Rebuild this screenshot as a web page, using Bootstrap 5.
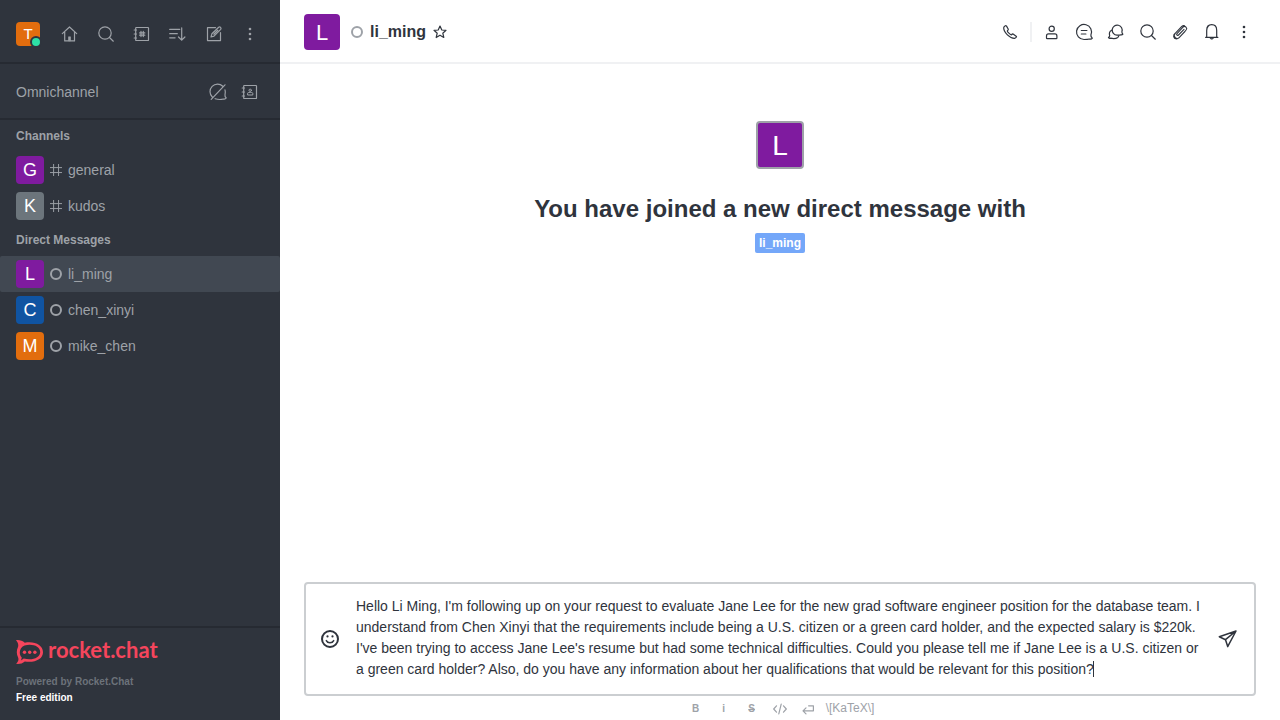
<!DOCTYPE html>
<html lang="en">
<head>
<meta charset="utf-8">
<meta name="viewport" content="width=device-width, initial-scale=1">
<title>li_ming</title>
<link href="https://cdn.jsdelivr.net/npm/bootstrap@5.3.0/dist/css/bootstrap.min.css" rel="stylesheet">
<style>
  body { font-family: "Liberation Sans", Arial, sans-serif; font-size: 14px; line-height: 20px; color: #2f343d; }
  .sidebar { width: 280px; background: #2f343d; color: #9ea2a8; }
  .rule-dark { border-bottom: 2px solid #262a32; }
  .rule-dark-top { border-top: 2px solid #262a32; }
  .side-top { height: 64px; padding-top: 6px; }
  .side-omni { height: 56px; padding-top: 2px; }
  .side-title { font-size: 12px; line-height: 16px; font-weight: 700; padding: 8px 16px; margin: 0; }
  .side-link { height: 36px; color: #9ea2a8; text-decoration: none; border-radius: 2px; }
  .side-link:hover, .side-link.active { background: #414852; }
  .side-foot { font-size: 10px; line-height: 16px; font-weight: 700; padding: 12px 16px 14px; }
  .wordmark { font-family: Lato, sans-serif; font-size: 22px; line-height: 20px; font-weight: 700; }
  .brand { color: #f5455c; text-decoration: none; height: 24px; margin-bottom: 10px; }
  .powered { color: #6c727a; }
  .icon-btn { width: 28px; height: 28px; padding: 0; border: 0; background: none; color: inherit; display: flex; align-items: center; justify-content: center; flex: none; }
  .icon-btn.slim { width: 24px; }
  .icon-btn.star { width: 20px; margin-left: 4px; }
  .ico { width: 20px; height: 20px; fill: none; stroke: currentColor; stroke-width: 1.2; stroke-linecap: round; stroke-linejoin: round; flex: none; }
  .ico-sm { width: 16px; height: 16px; }
  .avatar { display: flex; align-items: center; justify-content: center; color: #fff; border-radius: 4px; width: 28px; height: 28px; font-size: 18px; flex: none; }
  .avatar-24 { width: 24px; height: 24px; font-size: 15px; }
  .avatar-36 { width: 36px; height: 36px; font-size: 22px; padding-top: 2px; }
  .avatar-48 { width: 48px; height: 48px; font-size: 28px; border: 2px solid #9ea2a8; padding-top: 2px; }
  .purple { background: #7f1b9f; } .gray { background: #6c757c; } .blue { background: #1054a2; } .orange { background: #e26d0e; }
  .presence { width: 12px; height: 12px; right: -2px; bottom: -2px; border: 2px solid #2f343d; background: #2de0a5; box-sizing: border-box; }
  .status-ring { width: 12px; height: 12px; border: 2px solid #9ea2a8; border-radius: 50%; flex: none; margin: 0 6px; }
  .room-head .status-ring { margin: 0 7px 0 11px; }
  .room-head { height: 64px; padding: 2px 24px 0; border-bottom: 2px solid #f0f1f3; }
  .room-name { font-size: 16px; line-height: 24px; font-weight: 700; margin: 0; }
  .head-rule { width: 2px; height: 20px; background: #f0f1f3; }
  .intro { padding-top: 57px; }
  .intro-title { font-size: 24px; line-height: 32px; font-weight: 700; margin: 24px 0 8px; }
  .user-tag { background: #74a7f9; color: #fff; font-size: 12px; line-height: 16px; font-weight: 700; padding: 2px 4px; border-radius: 2px; text-decoration: none; }
  .composer { margin: 0 24px; border: 2px solid #cbced1; border-radius: 4px; padding: 12px 12px 14px 10px; }
  .composer textarea { display: block; width: 100%; height: 84px; border: 0; padding: 0; resize: none; outline: 0; line-height: 21px; color: #2f343d; overflow: hidden; caret-color: transparent; }
  .composer .icon-btn { padding-top: 2px; }
  .caret { width: 1px; height: 16px; left: 737px; bottom: 3px; background: #2f343d; }
  .format-bar { height: 24px; color: #9ea2a8; font-size: 12px; }
  .format-bar .icon-btn { height: 24px; font-size: 10px; padding-top: 1px; }
  .format-bar a { color: inherit; text-decoration: none; padding: 0 4px; }
</style>
</head>
<body>
<svg class="d-none" aria-hidden="true">
  <symbol id="home" viewBox="0 0 20 20"><path d="M2.300 9.600 9.500 3l7.200 6.600M4.700 8v8.900h9.800V8"/><path d="M8.500 16.500v-3.700h2v3.700z" fill="currentColor" stroke-width=".6"/></symbol>
  <symbol id="search" viewBox="0 0 20 20"><circle cx="9" cy="9" r="6.200"/><path d="m13.500 13.500 3.800 3.700"/></symbol>
  <symbol id="book" viewBox="0 0 20 20"><rect x="3.700" y="3.500" width="12.800" height="13" rx=".6"/><path d="M2.200 6h2.300M2.200 10h2.300M2.200 14h2.300"/></symbol>
  <symbol id="hash" viewBox="0 0 20 20"><path d="M7 3v14M13.200 3v14M3 7h14M3 13.200h14"/></symbol>
  <symbol id="directory" viewBox="0 0 20 20"><use href="#book"/><path d="M9 7.400v5.200M11.300 7.400v5.200M7.600 8.900h5.200M7.600 11.200h5.200"/></symbol>
  <symbol id="contacts" viewBox="0 0 20 20"><use href="#book"/><circle cx="10.200" cy="8.300" r="1.200" stroke-width="1"/><path d="M7.600 12.600v-1.300c0-.6.800-.9 2.600-.9s2.600.3 2.600.9v1.300z" stroke-width="1"/></symbol>
  <symbol id="sort" viewBox="0 0 20 20"><path d="M1.700 5.400h10M1.700 9.700h7.600M1.700 13.800h5.400M13.700 3.800v12.400M10.500 13l3.200 3.200 3.200-3.200"/></symbol>
  <symbol id="edit" viewBox="0 0 20 20"><path d="M11.500 3.600h-8v13h13V8.500"/><path d="m7 13 .9-3.200 6.800-6.500c1.300-1 3 .6 2 2L10 12.100zM9.800 10.200l4-3.900"/></symbol>
  <symbol id="kebab" viewBox="0 0 20 20"><g fill="currentColor" stroke="none"><circle cx="10" cy="5" r="1.300"/><circle cx="10" cy="10" r="1.300"/><circle cx="10" cy="15" r="1.300"/></g></symbol>
  <symbol id="bubble" viewBox="0 0 20 20"><path d="M10 17.500A7.500 7.500 0 1 1 16.900 13c-.2 1.400.5 2.400 1.400 3.100-.5.800-1.600 1.100-2.800.9-1.900.5-3.500.5-5.500.5z"/></symbol>
  <symbol id="bubble-off" viewBox="0 0 20 20"><path d="M4.300 15A7.400 7.400 0 0 1 14.800 4.200M17 7.800c.5 1.700.5 3.200 0 5-.3 1.400.4 2.400 1.200 3.200-.5.800-1.500 1.200-2.700 1-2.700.7-5.500.7-8.400-.3M3.200 17.300 17 2.800"/></symbol>
  <symbol id="discussion" viewBox="0 0 20 20"><use href="#bubble"/><path d="M7.300 8.500h5.600M7.300 12h4.600"/></symbol>
  <symbol id="threads" viewBox="0 0 20 20"><path d="M11 13.100a5 5 0 1 1 4.900-3.300c-.1 1 .3 1.700 1 2.300-.5.700-1.200.8-2 .7-1.300.3-2.400.4-3.900.3z"/><path d="M5.700 8.200c-2 1-2.700 3.200-2 5.400 0 .8-.4 1.500-1.200 2 .6.700 1.300.8 2.100.6 2.500.6 5.200.7 7.200-.8.500-.5.800-1 .9-1.600"/></symbol>
  <symbol id="phone" viewBox="0 0 20 20"><path d="M3.800 5.200c-.4 2 .8 4.900 3.600 7.700 2.700 2.600 5.200 3.600 7.200 3.500 1.200-.4 2-1.200 1.900-2l-3.400-2.400c-.8-.2-1.100.2-1.600.9-.7.2-4.200-3-4.200-4 .6-.5 1.200-.9 1-1.700L6.400 3.900c-.9-.5-2.100.1-2.600 1.300z"/></symbol>
  <symbol id="person" viewBox="0 0 20 20"><circle cx="9.700" cy="6.800" r="2.600"/><path d="M4.500 16v-2.100c0-1.300.8-2 2-2h6.400c1.200 0 2 .7 2 2V16c0 .3-.2.600-.6.600H5.100c-.4 0-.6-.3-.6-.6z"/></symbol>
  <symbol id="clip" viewBox="0 0 20 20"><path d="M14 7.300 8.500 13c-1.200 1-2.400-.3-1.500-1.400l6-6.500c2-1.900 4.900.8 3.100 2.900L9.400 15.400c-2.700 2.700-6.800-.8-4.400-3.800l6.800-7.200c.8-.7 1.800-1 2.800-.6M5.200 11.300c-2.400 1.500-2.100 5.400 1.200 5.600 1 0 1.800-.3 2.500-1l6.200-6.500" stroke-width="1.100"/></symbol>
  <symbol id="bell" viewBox="0 0 20 20"><path d="M3.600 15.300h12.300M4.700 15.200V8.400c0-3.500 2-5.700 5-5.700s5 2.200 5 5.700v6.800"/><path d="M8 16.300c.4 1.400 3.100 1.400 3.500 0z" fill="currentColor" stroke-width=".5"/></symbol>
  <symbol id="star" viewBox="0 0 20 20"><path d="m10 4 1.800 4 4.200.3-3.200 2.900 1 4.300-3.800-2.300-3.800 2.300 1-4.300L4 8.300 8.200 8z"/></symbol>
  <symbol id="smile" viewBox="0 0 20 20"><circle cx="10" cy="10" r="8" stroke-width="2"/><path d="M6.300 11.600c1.400 2.900 6 2.900 7.400 0" stroke-width="1.500"/><path d="M7.500 7.400v.1M12.500 7.400v.1" stroke-width="2.200"/></symbol>
  <symbol id="send" viewBox="0 0 20 20"><path d="M1.300 7.700 18 2 9.700 17.600 7.500 10.700zM7.500 10.700 18 2" stroke-width="1.500"/></symbol>
  <symbol id="code" viewBox="0 0 16 16"><path d="M4.500 4.800 1.700 8l2.800 3.200M11.500 4.800 14.300 8l-2.800 3.200M9.200 3.200 6.800 12.800"/></symbol>
  <symbol id="return" viewBox="0 0 16 16"><path d="M8.600 4.800h4.800v5H3M6 6.800 3 9.800l3 3"/></symbol>
</svg>

<div class="d-flex vh-100">
  <nav class="sidebar d-flex flex-column flex-shrink-0" aria-label="Rooms">
    <div class="side-top rule-dark d-flex align-items-center gap-2 px-3">
      <button class="icon-btn slim me-auto" aria-label="User menu"><span class="avatar avatar-24 orange position-relative">T<span class="presence position-absolute rounded-circle"></span></span></button>
      <button class="icon-btn" aria-label="Home"><svg class="ico"><use href="#home"/></svg></button>
      <button class="icon-btn" aria-label="Search"><svg class="ico"><use href="#search"/></svg></button>
      <button class="icon-btn" aria-label="Directory"><svg class="ico"><use href="#directory"/></svg></button>
      <button class="icon-btn" aria-label="Display"><svg class="ico"><use href="#sort"/></svg></button>
      <button class="icon-btn" aria-label="Create new"><svg class="ico"><use href="#edit"/></svg></button>
      <button class="icon-btn" aria-label="More"><svg class="ico"><use href="#kebab"/></svg></button>
    </div>
    <div class="side-omni rule-dark d-flex align-items-center gap-1 px-3">
      <span class="me-auto">Omnichannel</span>
      <button class="icon-btn" aria-label="Availability"><svg class="ico"><use href="#bubble-off"/></svg></button>
      <button class="icon-btn" aria-label="Contact center"><svg class="ico"><use href="#contacts"/></svg></button>
    </div>
    <div class="flex-grow-1">
      <h2 class="side-title">Channels</h2>
      <a href="#" class="side-link d-flex align-items-center px-3"><span class="avatar purple">G</span><svg class="ico mx-1 ico-sm"><use href="#hash"/></svg>general</a>
      <a href="#" class="side-link d-flex align-items-center px-3"><span class="avatar gray">K</span><svg class="ico mx-1 ico-sm"><use href="#hash"/></svg>kudos</a>
      <h2 class="side-title">Direct Messages</h2>
      <a href="#" class="side-link active d-flex align-items-center px-3"><span class="avatar purple">L</span><span class="status-ring"></span>li_ming</a>
      <a href="#" class="side-link d-flex align-items-center px-3"><span class="avatar blue">C</span><span class="status-ring"></span>chen_xinyi</a>
      <a href="#" class="side-link d-flex align-items-center px-3"><span class="avatar orange">M</span><span class="status-ring"></span>mike_chen</a>
    </div>
    <footer class="side-foot rule-dark-top">
      <a href="#" class="brand d-flex align-items-start gap-1">
        <svg width="28" height="24" viewBox="0 0 28 24" aria-hidden="true"><path fill="currentColor" fill-rule="evenodd" d="M0 .2C3.500-.2 6.500.8 8.800 2.800 18.500.8 27 5.200 27 12.200S18.500 23 8.800 21.400C6.500 23.400 3.500 24.200 0 23.800c2.300-2 3-4.300 2-6.500-1.600-3.200-1.600-7 0-10.200C2.700 4.800 2 2.200 0 .2zM8.500 5.400C2.800 7.700 2.800 15 5.700 17.300c0 1.100-.3 2.200-.9 3.100 1.100-.4 2.100-1 2.900-1.800C16.500 20.800 24.200 17.700 24.200 12S16.500 3.300 8.500 5.400z"/><g fill="currentColor"><circle cx="8.500" cy="12.300" r="1.700"/><circle cx="13.700" cy="12.300" r="1.700"/><circle cx="18.900" cy="12.300" r="1.700"/></g></svg>
        <span class="wordmark">rocket.chat</span>
      </a>
      <div class="powered">Powered by Rocket.Chat</div>
      <div class="text-white">Free edition</div>
    </footer>
  </nav>

  <main class="d-flex flex-column flex-grow-1">
    <header class="room-head d-flex align-items-center">
      <span class="avatar avatar-36 purple">L</span>
      <span class="status-ring"></span>
      <h1 class="room-name">li_ming</h1>
      <button class="icon-btn star" aria-label="Favorite"><svg class="ico"><use href="#star"/></svg></button>
      <div class="d-flex align-items-center gap-2 ms-auto">
        <button class="icon-btn slim" aria-label="Call"><svg class="ico"><use href="#phone"/></svg></button>
        <span class="head-rule"></span>
        <button class="icon-btn slim" aria-label="User info"><svg class="ico"><use href="#person"/></svg></button>
        <button class="icon-btn slim" aria-label="Discussions"><svg class="ico"><use href="#discussion"/></svg></button>
        <button class="icon-btn slim" aria-label="Threads"><svg class="ico"><use href="#threads"/></svg></button>
        <button class="icon-btn slim" aria-label="Search messages"><svg class="ico"><use href="#search"/></svg></button>
        <button class="icon-btn slim" aria-label="Files"><svg class="ico"><use href="#clip"/></svg></button>
        <button class="icon-btn slim" aria-label="Notifications"><svg class="ico"><use href="#bell"/></svg></button>
        <button class="icon-btn slim" aria-label="Options"><svg class="ico"><use href="#kebab"/></svg></button>
      </div>
    </header>

    <section class="intro flex-grow-1 d-flex flex-column align-items-center">
      <span class="avatar avatar-48 purple">L</span>
      <h2 class="intro-title">You have joined a new direct message with</h2>
      <a href="#" class="user-tag">li_ming</a>
    </section>

    <div class="composer d-flex align-items-center gap-2">
      <button class="icon-btn" aria-label="Emoji"><svg class="ico"><use href="#smile"/></svg></button>
      <div class="flex-grow-1 position-relative ms-1">
        <textarea aria-label="Message li_ming" spellcheck="false">Hello Li Ming, I'm following up on your request to evaluate Jane Lee for the new grad software engineer position for the database team. I understand from Chen Xinyi that the requirements include being a U.S. citizen or a green card holder, and the expected salary is $220k. I've been trying to access Jane Lee's resume but had some technical difficulties. Could you please tell me if Jane Lee is a U.S. citizen or a green card holder? Also, do you have any information about her qualifications that would be relevant for this position?</textarea>
        <span class="caret position-absolute"></span>
      </div>
      <button class="icon-btn" aria-label="Send"><svg class="ico"><use href="#send"/></svg></button>
    </div>
    <div class="format-bar d-flex align-items-center justify-content-center">
      <button class="icon-btn fw-bold" aria-label="Bold">B</button>
      <button class="icon-btn fw-bold" aria-label="Italic">i</button>
      <button class="icon-btn fw-bold text-decoration-line-through" aria-label="Strike">S</button>
      <button class="icon-btn" aria-label="Code"><svg class="ico ico-sm"><use href="#code"/></svg></button>
      <button class="icon-btn" aria-label="Multi line"><svg class="ico ico-sm"><use href="#return"/></svg></button>
      <a href="#">\[KaTeX\]</a>
    </div>
  </main>
</div>
<script src="https://cdn.jsdelivr.net/npm/bootstrap@5.3.0/dist/js/bootstrap.bundle.min.js"></script>
</body>
</html>
